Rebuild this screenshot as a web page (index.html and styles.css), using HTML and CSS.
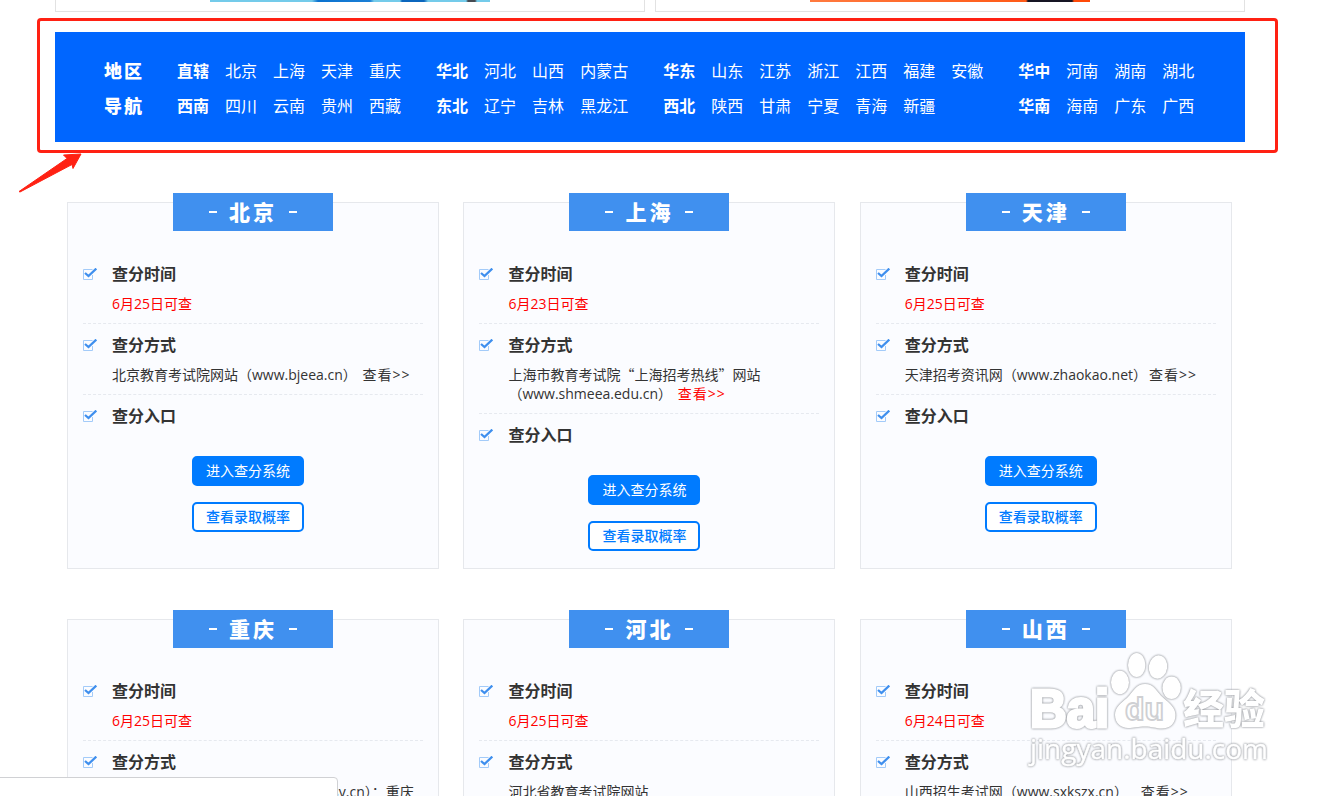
FILE: index.html
```
<!DOCTYPE html>
<html lang="zh-CN">
<head>
  <meta charset="UTF-8" />
  <meta name="viewport" content="width=device-width, initial-scale=1.0" />
  <title>高考查分</title>
  <link rel="stylesheet" href="styles.css">
</head>
<body>
  <svg class="defs" width="0" height="0">
    <symbol id="check" viewBox="0 0 14 12">
      <path d="M9.5 1.5H.5v10h9V7" fill="none" stroke="#a3cbf9" />
      <path d="M2 5l3.500 3L13.300.6" fill="none" stroke="#3f8fee" stroke-width="2.300" />
    </symbol>
  </svg>

  <div class="container">
    <div class="banners">
      <div class="banner"><div class="banner-img banner-blue"></div></div>
      <div class="banner"><div class="banner-img banner-orange"></div></div>
    </div>

    <nav class="area-nav">
      <div class="area-title">地区<br>导航</div>
      <div class="area-group">
        <p><b>直辖</b><a>北京</a><a>上海</a><a>天津</a><a>重庆</a></p>
        <p><b>西南</b><a>四川</a><a>云南</a><a>贵州</a><a>西藏</a></p>
      </div>
      <div class="area-group">
        <p><b>华北</b><a>河北</a><a>山西</a><a>内蒙古</a></p>
        <p><b>东北</b><a>辽宁</a><a>吉林</a><a>黑龙江</a></p>
      </div>
      <div class="area-group">
        <p><b>华东</b><a>山东</a><a>江苏</a><a>浙江</a><a>江西</a><a>福建</a><a>安徽</a></p>
        <p><b>西北</b><a>陕西</a><a>甘肃</a><a>宁夏</a><a>青海</a><a>新疆</a></p>
      </div>
      <div class="area-group">
        <p><b>华中</b><a>河南</a><a>湖南</a><a>湖北</a></p>
        <p><b>华南</b><a>海南</a><a>广东</a><a>广西</a></p>
      </div>
    </nav>

    <div class="cards">
      <div class="card">
        <h2>北京</h2>
        <ul>
          <li><svg class="icon"><use href="#check" /></svg><h3>查分时间</h3><p class="red">6月25日可查</p></li>
          <li><svg class="icon"><use href="#check" /></svg><h3>查分方式</h3><p>北京教育考试院网站（www.bjeea.cn） <a class="more">查看&gt;&gt;</a></p></li>
          <li><svg class="icon"><use href="#check" /></svg><h3>查分入口</h3></li>
        </ul>
        <div class="buttons"><a class="btn">进入查分系统</a><a class="btn btn-line">查看录取概率</a></div>
      </div>

      <div class="card">
        <h2>上海</h2>
        <ul>
          <li><svg class="icon"><use href="#check" /></svg><h3>查分时间</h3><p class="red">6月23日可查</p></li>
          <li><svg class="icon"><use href="#check" /></svg><h3>查分方式</h3><p>上海市教育考试院<span class="cjk">“上海招考热线”</span>网站<br>（www.shmeea.edu.cn） <a class="more red">查看&gt;&gt;</a></p></li>
          <li><svg class="icon"><use href="#check" /></svg><h3>查分入口</h3></li>
        </ul>
        <div class="buttons"><a class="btn">进入查分系统</a><a class="btn btn-line">查看录取概率</a></div>
      </div>

      <div class="card">
        <h2>天津</h2>
        <ul>
          <li><svg class="icon"><use href="#check" /></svg><h3>查分时间</h3><p class="red">6月25日可查</p></li>
          <li><svg class="icon"><use href="#check" /></svg><h3>查分方式</h3><p>天津招考资讯网（www.zhaokao.net）<a class="more">查看&gt;&gt;</a></p></li>
          <li><svg class="icon"><use href="#check" /></svg><h3>查分入口</h3></li>
        </ul>
        <div class="buttons"><a class="btn">进入查分系统</a><a class="btn btn-line">查看录取概率</a></div>
      </div>

      <div class="card">
        <h2>重庆</h2>
        <ul>
          <li><svg class="icon"><use href="#check" /></svg><h3>查分时间</h3><p class="red">6月25日可查</p></li>
          <li><svg class="icon"><use href="#check" /></svg><h3>查分方式</h3><p>重庆市教育考试院网站&nbsp; （www.cqksy.cn）：重庆</p></li>
        </ul>
      </div>

      <div class="card">
        <h2>河北</h2>
        <ul>
          <li><svg class="icon"><use href="#check" /></svg><h3>查分时间</h3><p class="red">6月25日可查</p></li>
          <li><svg class="icon"><use href="#check" /></svg><h3>查分方式</h3><p>河北省教育考试院网站</p></li>
        </ul>
      </div>

      <div class="card">
        <h2>山西</h2>
        <ul>
          <li><svg class="icon"><use href="#check" /></svg><h3>查分时间</h3><p class="red">6月24日可查</p></li>
          <li><svg class="icon"><use href="#check" /></svg><h3>查分方式</h3><p>山西招生考试网（www.sxkszx.cn）&nbsp;&nbsp; <a class="more">查看&gt;&gt;</a></p></li>
        </ul>
      </div>
    </div>
  </div>

  <div class="highlight"></div>
  <svg class="arrow" width="66" height="42" viewBox="0 0 66 42">
    <path d="M1 40.500L49 7.500 45.500 4 63 3 55 17.500 54 13.500 2 41z" fill="#ff2113" stroke="#ff2113" stroke-linejoin="round" />
  </svg>

  <svg class="watermark" width="260" height="130" viewBox="0 0 260 130">
    <g class="mark-shape">
      <ellipse cx="100" cy="37.5" rx="9" ry="11.7" />
      <ellipse cx="116.7" cy="20" rx="8.7" ry="12" />
      <ellipse cx="138" cy="22" rx="9.2" ry="11.700" transform="rotate(8 138 22)" />
      <ellipse cx="151.6" cy="42.8" rx="9.2" ry="11.2" />
      <path d="M125 39c-9 0-12 8-18 14-6 5-12 9-12 17 0 8 6 13 13 13 6 0 10-1.500 17-1.500s11 2 17 2c8 0 13.500-5 13.500-13.500 0-7-6-12-12-17-7-6-9-14-18.500-14z" />
      <text class="mark-bai" x="10" y="81.5" textLength="79" lengthAdjust="spacingAndGlyphs">Bai</text>
      <text class="mark-cn" x="163" y="79" textLength="82">经验</text>
      <text class="mark-url" x="10" y="114" textLength="238" lengthAdjust="spacingAndGlyphs">jingyan.baidu.com</text>
    </g>
    <text class="mark-du" x="105" y="75" textLength="39" lengthAdjust="spacingAndGlyphs">du</text>
  </svg>

  <div class="status-bar"></div>
</body>
</html>
```
FILE: styles.css
```
body {
  margin: 0;
  height: 796px;
  overflow: hidden;
  position: relative;
  background: #fff;
  color: #333;
  font-family: "Open Sans", "Noto Sans CJK SC", sans-serif;
  font-size: 14px;
}
h2, h3, p, ul {
  margin: 0;
  padding: 0;
}
.defs {
  display: block;
}
.container {
  width: 1190px;
  height: 796px;
  overflow: hidden;
  margin-left: 55px;
}
.banners {
  display: flex;
  gap: 10px;
}
.banner {
  flex: 1;
  height: 11px;
  border: 1px solid #e2e2e2;
  border-top: none;
}
.banner-img {
  width: 280px;
  height: 2px;
  margin-left: 154px;
}
.banner-blue {
  background: linear-gradient(90deg, #74cbea 102px, #0b72cf 108px, #1a7fd6 160px, #74cbea 164px, #74cbea 190px, #0b66bd 192px, #0b66bd 214px, #74cbea 218px, #74cbea 256px, #454b52 258px, #454b52 265px, #74cbea 267px);
}
.banner-orange {
  background: linear-gradient(90deg, #ff7a3f, #ff5a17 216px, #161524 218px, #161524 262px, #ff4a08 264px);
}
.area-nav {
  display: flex;
  height: 71px;
  margin-top: 20px;
  padding: 21px 0 18px 49px;
  background: #06f;
  color: #fff;
  font-family: "Noto Sans CJK SC", sans-serif;
  font-size: 16px;
  line-height: 35px;
}
.area-title {
  width: 73px;
  font-size: 18px;
  font-weight: 900;
  letter-spacing: 2px;
}
.area-group {
  margin-right: 35px;
}
.area-group p {
  display: flex;
  gap: 16px;
}
.cards {
  display: grid;
  grid-template-columns: repeat(3, 372px);
  gap: 50px 24.4px;
  padding: 60px 0 0 12px;
}
.card {
  height: 367px;
  box-sizing: border-box;
  padding: 0 15px;
  border: 1px solid #e6e8ec;
  background: #fbfcff;
}
.card h2 {
  display: flex;
  justify-content: center;
  align-items: center;
  gap: 12px;
  box-sizing: border-box;
  width: 160px;
  height: 38px;
  margin: -10px auto 22px;
  background: #4090ef;
  color: #fff;
  font-family: "Noto Sans CJK SC", sans-serif;
  font-size: 21px;
  font-weight: 900;
  line-height: 36px;
  padding-bottom: 2px;
  letter-spacing: 3px;
}
.card h2::before,
.card h2::after {
  content: "";
  width: 8px;
  height: 2px;
  margin-top: 1px;
  background: #fff;
}
.card li {
  display: grid;
  grid-template-columns: 29px 1fr;
  padding: 10px 0 10px;
  border-bottom: 1px dashed #e6e9ef;
}
.card li:last-child {
  border-bottom: none;
}
.icon {
  width: 14px;
  height: 12px;
  margin-top: 5px;
}
.card h3 {
  font-family: "Noto Sans CJK SC", sans-serif;
  font-size: 16px;
  line-height: 20px;
}
.card p {
  grid-column: 2;
  margin-top: 11px;
  line-height: 19px;
  white-space: nowrap;
}
.card .red {
  color: #f00;
}
.cjk {
  font-family: "Noto Sans CJK SC", sans-serif;
}
.more {
  margin-left: 2px;
  letter-spacing: 1px;
}
.buttons {
  display: flex;
  flex-direction: column;
  align-items: center;
  gap: 16px;
  margin-top: 21px;
  padding-right: 10px;
}
.btn {
  box-sizing: border-box;
  width: 112px;
  height: 30px;
  border: 2px solid #007bff;
  border-radius: 5px;
  background: #007bff;
  color: #fff;
  font-family: "Noto Sans CJK SC", sans-serif;
  line-height: 24px;
  text-align: center;
}
.btn-line {
  background: #fff;
  color: #007bff;
  font-weight: 500;
}
.highlight {
  position: absolute;
  left: 37px;
  top: 18px;
  width: 1235px;
  height: 129px;
  border: 3px solid #ff2113;
  border-radius: 4px;
}
.arrow {
  position: absolute;
  left: 18px;
  top: 151px;
}
.watermark {
  position: absolute;
  left: 1020px;
  top: 645px;
}
.mark-shape {
  fill: #fff;
  filter: drop-shadow(0 0 0.8px #909398) drop-shadow(0 0 0.5px #d0d2d6);
}
.mark-bai {
  font: bold 53px "Liberation Sans", sans-serif;
  stroke: #fff;
  stroke-width: 3px;
}
.mark-cn {
  font: 900 41px "Noto Sans CJK SC", sans-serif;
}
.mark-url {
  font: 28px "Open Sans", sans-serif;
  stroke: #fff;
  stroke-width: 0.5px;
}
.mark-du {
  font: bold 32px "Liberation Sans", sans-serif;
  fill: #fff;
  stroke: #cfd0d3;
  stroke-width: 1.8px;
}
.status-bar {
  position: absolute;
  left: -1px;
  bottom: -1px;
  width: 337px;
  height: 18px;
  border: 1px solid #d0d1d4;
  border-top-right-radius: 4px;
  background: #fff;
}
```
